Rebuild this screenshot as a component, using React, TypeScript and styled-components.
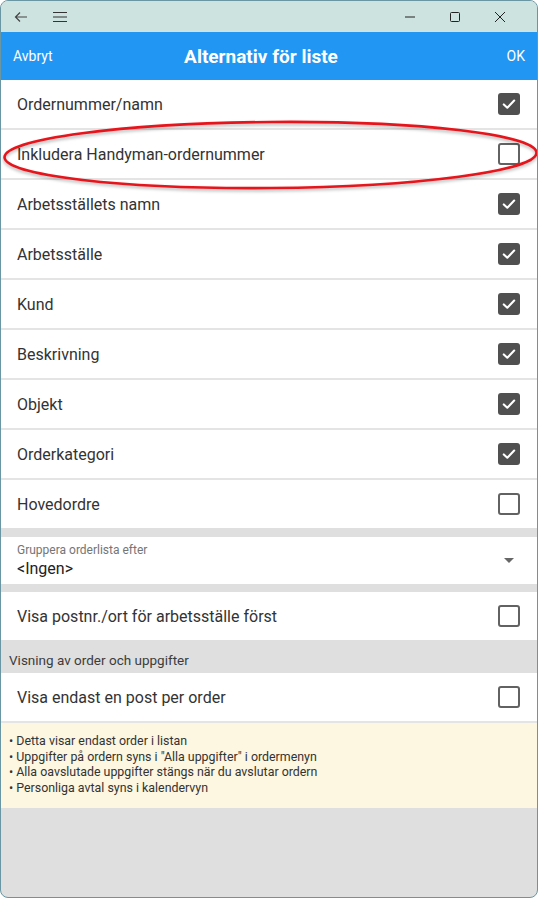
import styled, { createGlobalStyle } from "styled-components";

const GlobalStyle = createGlobalStyle`
  html, body {
    margin: 0;
    padding: 0;
    background: #ffffff;
  }
  body {
    font-family: Roboto, "Noto Sans", "Liberation Sans", sans-serif;
  }
`;

const Window = styled.div`
  position: relative;
  box-sizing: border-box;
  width: 538px;
  height: 898px;
  border: 1px solid #6a95a2;
  border-radius: 8px;
  overflow: hidden;
  display: flex;
  flex-direction: column;
  background-color: #dfdfdf;
`;

const TitleBar = styled.div`
  height: 31px;
  flex-shrink: 0;
  display: flex;
  align-items: center;
  background-color: #cde3df;
  padding: 0 15px 0 11px;
`;

const TitleIcon = styled.div<{ $gap?: number }>`
  width: 18px;
  height: 18px;
  display: flex;
  align-items: center;
  justify-content: center;
  margin-left: ${(p) => p.$gap ?? 0}px;
  color: #333;
`;

const Spacer = styled.div`
  flex: 1;
`;

const WinButton = styled.div`
  width: 45px;
  height: 31px;
  display: flex;
  align-items: center;
  justify-content: center;
  color: #222;
`;

const Header = styled.div`
  height: 48px;
  flex-shrink: 0;
  display: grid;
  grid-template-columns: 70px 1fr 70px;
  align-items: center;
  background-color: #2196f3;
  color: #fff;
  padding: 0 12px;
`;

const HeaderAction = styled.div<{ $right?: boolean }>`
  font-size: 14px;
  text-align: ${(p) => (p.$right ? "right" : "left")};
`;

const HeaderTitle = styled.div`
  font-size: 19px;
  font-weight: 700;
  text-align: center;
  padding-right: 16px;
`;

const Group = styled.div<{ $gapTop?: number }>`
  display: flex;
  flex-direction: column;
  background-color: #fff;
  margin-top: ${(p) => p.$gapTop ?? 0}px;
`;

const Row = styled.div<{ $divider?: boolean }>`
  height: 48px;
  display: flex;
  align-items: center;
  justify-content: space-between;
  padding: 0 17px 0 16px;
  border-bottom: ${(p) => (p.$divider ? "2px solid #e4e4e4" : "none")};
  font-size: 16px;
  color: #333;
`;

const Box = styled.div<{ $checked: boolean }>`
  box-sizing: border-box;
  width: 22px;
  height: 22px;
  border-radius: 3px;
  display: flex;
  align-items: center;
  justify-content: center;
  background-color: ${(p) => (p.$checked ? "#505050" : "#fff")};
  border: ${(p) => (p.$checked ? "none" : "2px solid #626262")};
`;

const SelectRow = styled.div`
  height: 47px;
  display: flex;
  align-items: center;
  justify-content: space-between;
  padding: 0 23px 0 16px;
`;

const SelectText = styled.div`
  display: flex;
  flex-direction: column;
  padding-top: 1px;
`;

const SelectLabel = styled.div`
  font-size: 12px;
  color: #757575;
  line-height: 14px;
`;

const SelectValue = styled.div`
  font-size: 16px;
  color: #222;
  line-height: 20px;
  margin-top: 2px;
`;

const Caret = styled.div`
  width: 0;
  height: 0;
  border-left: 5px solid transparent;
  border-right: 5px solid transparent;
  border-top: 5px solid #666;
`;

const SectionHeader = styled.div`
  box-sizing: border-box;
  height: 33px;
  display: flex;
  align-items: center;
  padding: 6px 0 0 8px;
  font-size: 13.5px;
  color: #3c3c3c;
  background-color: #dfdfdf;
`;

const Note = styled.div`
  background-color: #fdf6e0;
  padding: 10px 8px 13px 8px;
  font-size: 12.4px;
  line-height: 15.6px;
  color: #333;
`;

const Annotation = styled.svg`
  position: absolute;
  left: 0;
  top: 116px;
  pointer-events: none;
`;

function Check({ checked }: { checked: boolean }) {
  return (
    <Box $checked={checked}>
      {checked && (
        <svg width="16" height="16" viewBox="0 0 16 16">
          <path
            d="M2.8 8.4 L6.3 11.7 L13.2 4.6"
            fill="none"
            stroke="#fff"
            strokeWidth="2.1"
            strokeLinecap="round"
            strokeLinejoin="round"
          />
        </svg>
      )}
    </Box>
  );
}

const options = [
  { label: "Ordernummer/namn", checked: true },
  { label: "Inkludera Handyman-ordernummer", checked: false },
  { label: "Arbetsställets namn", checked: true },
  { label: "Arbetsställe", checked: true },
  { label: "Kund", checked: true },
  { label: "Beskrivning", checked: true },
  { label: "Objekt", checked: true },
  { label: "Orderkategori", checked: true },
  { label: "Hovedordre", checked: false },
];

const notes = [
  "Detta visar endast order i listan",
  'Uppgifter på ordern syns i "Alla uppgifter" i ordermenyn',
  "Alla oavslutade uppgifter stängs när du avslutar ordern",
  "Personliga avtal syns i kalendervyn",
];

export default function App() {
  return (
    <>
      <GlobalStyle />
      <Window>
        <TitleBar>
          <TitleIcon>
            <svg width="16" height="16" viewBox="0 0 16 16">
              <path
                d="M14 8 H2.5 M7 3.5 L2.5 8 L7 12.5"
                fill="none"
                stroke="#444"
                strokeWidth="1.2"
              />
            </svg>
          </TitleIcon>
          <TitleIcon $gap={21}>
            <svg width="16" height="16" viewBox="0 0 16 16">
              <path
                d="M1 3.5 H15 M1 8 H15 M1 12.5 H15"
                fill="none"
                stroke="#333"
                strokeWidth="1.1"
              />
            </svg>
          </TitleIcon>
          <Spacer />
          <WinButton>
            <svg width="12" height="12" viewBox="0 0 12 12">
              <path d="M1 6 H11" stroke="#222" strokeWidth="1" />
            </svg>
          </WinButton>
          <WinButton>
            <svg width="12" height="12" viewBox="0 0 12 12">
              <rect
                x="1.5"
                y="1.5"
                width="9"
                height="9"
                rx="1"
                fill="none"
                stroke="#222"
                strokeWidth="1"
              />
            </svg>
          </WinButton>
          <WinButton>
            <svg width="12" height="12" viewBox="0 0 12 12">
              <path d="M1 1 L11 11 M11 1 L1 11" stroke="#222" strokeWidth="1" />
            </svg>
          </WinButton>
        </TitleBar>

        <Header>
          <HeaderAction>Avbryt</HeaderAction>
          <HeaderTitle>Alternativ för liste</HeaderTitle>
          <HeaderAction $right>OK</HeaderAction>
        </Header>

        <Group>
          {options.map((o, i) => (
            <Row key={o.label} $divider={i < options.length - 1}>
              {o.label}
              <Check checked={o.checked} />
            </Row>
          ))}
        </Group>

        <Group $gapTop={9}>
          <SelectRow>
            <SelectText>
              <SelectLabel>Gruppera orderlista efter</SelectLabel>
              <SelectValue>&lt;Ingen&gt;</SelectValue>
            </SelectText>
            <Caret />
          </SelectRow>
        </Group>

        <Group $gapTop={8}>
          <Row>
            Visa postnr./ort för arbetsställe först
            <Check checked={false} />
          </Row>
        </Group>

        <SectionHeader>Visning av order och uppgifter</SectionHeader>

        <Group>
          <Row $divider>
            Visa endast en post per order
            <Check checked={false} />
          </Row>
          <Note>
            {notes.map((n) => (
              <div key={n}>• {n}</div>
            ))}
          </Note>
        </Group>

        <Annotation width="538" height="80" viewBox="0 0 538 80">
          <defs>
            <filter id="glow" x="-5%" y="-20%" width="110%" height="140%">
              <feGaussianBlur stdDeviation="1.5" />
            </filter>
          </defs>
          <g transform="rotate(-0.5 269 38)">
            <ellipse
              cx="269.5"
              cy="38"
              rx="266"
              ry="33"
              fill="none"
              stroke="#000"
              strokeOpacity="0.25"
              strokeWidth="3"
              filter="url(#glow)"
              transform="translate(0 2)"
            />
            <ellipse
              cx="269.5"
              cy="38"
              rx="266"
              ry="33"
              fill="none"
              stroke="#e8141b"
              strokeWidth="2.6"
            />
          </g>
        </Annotation>
      </Window>
    </>
  );
}
